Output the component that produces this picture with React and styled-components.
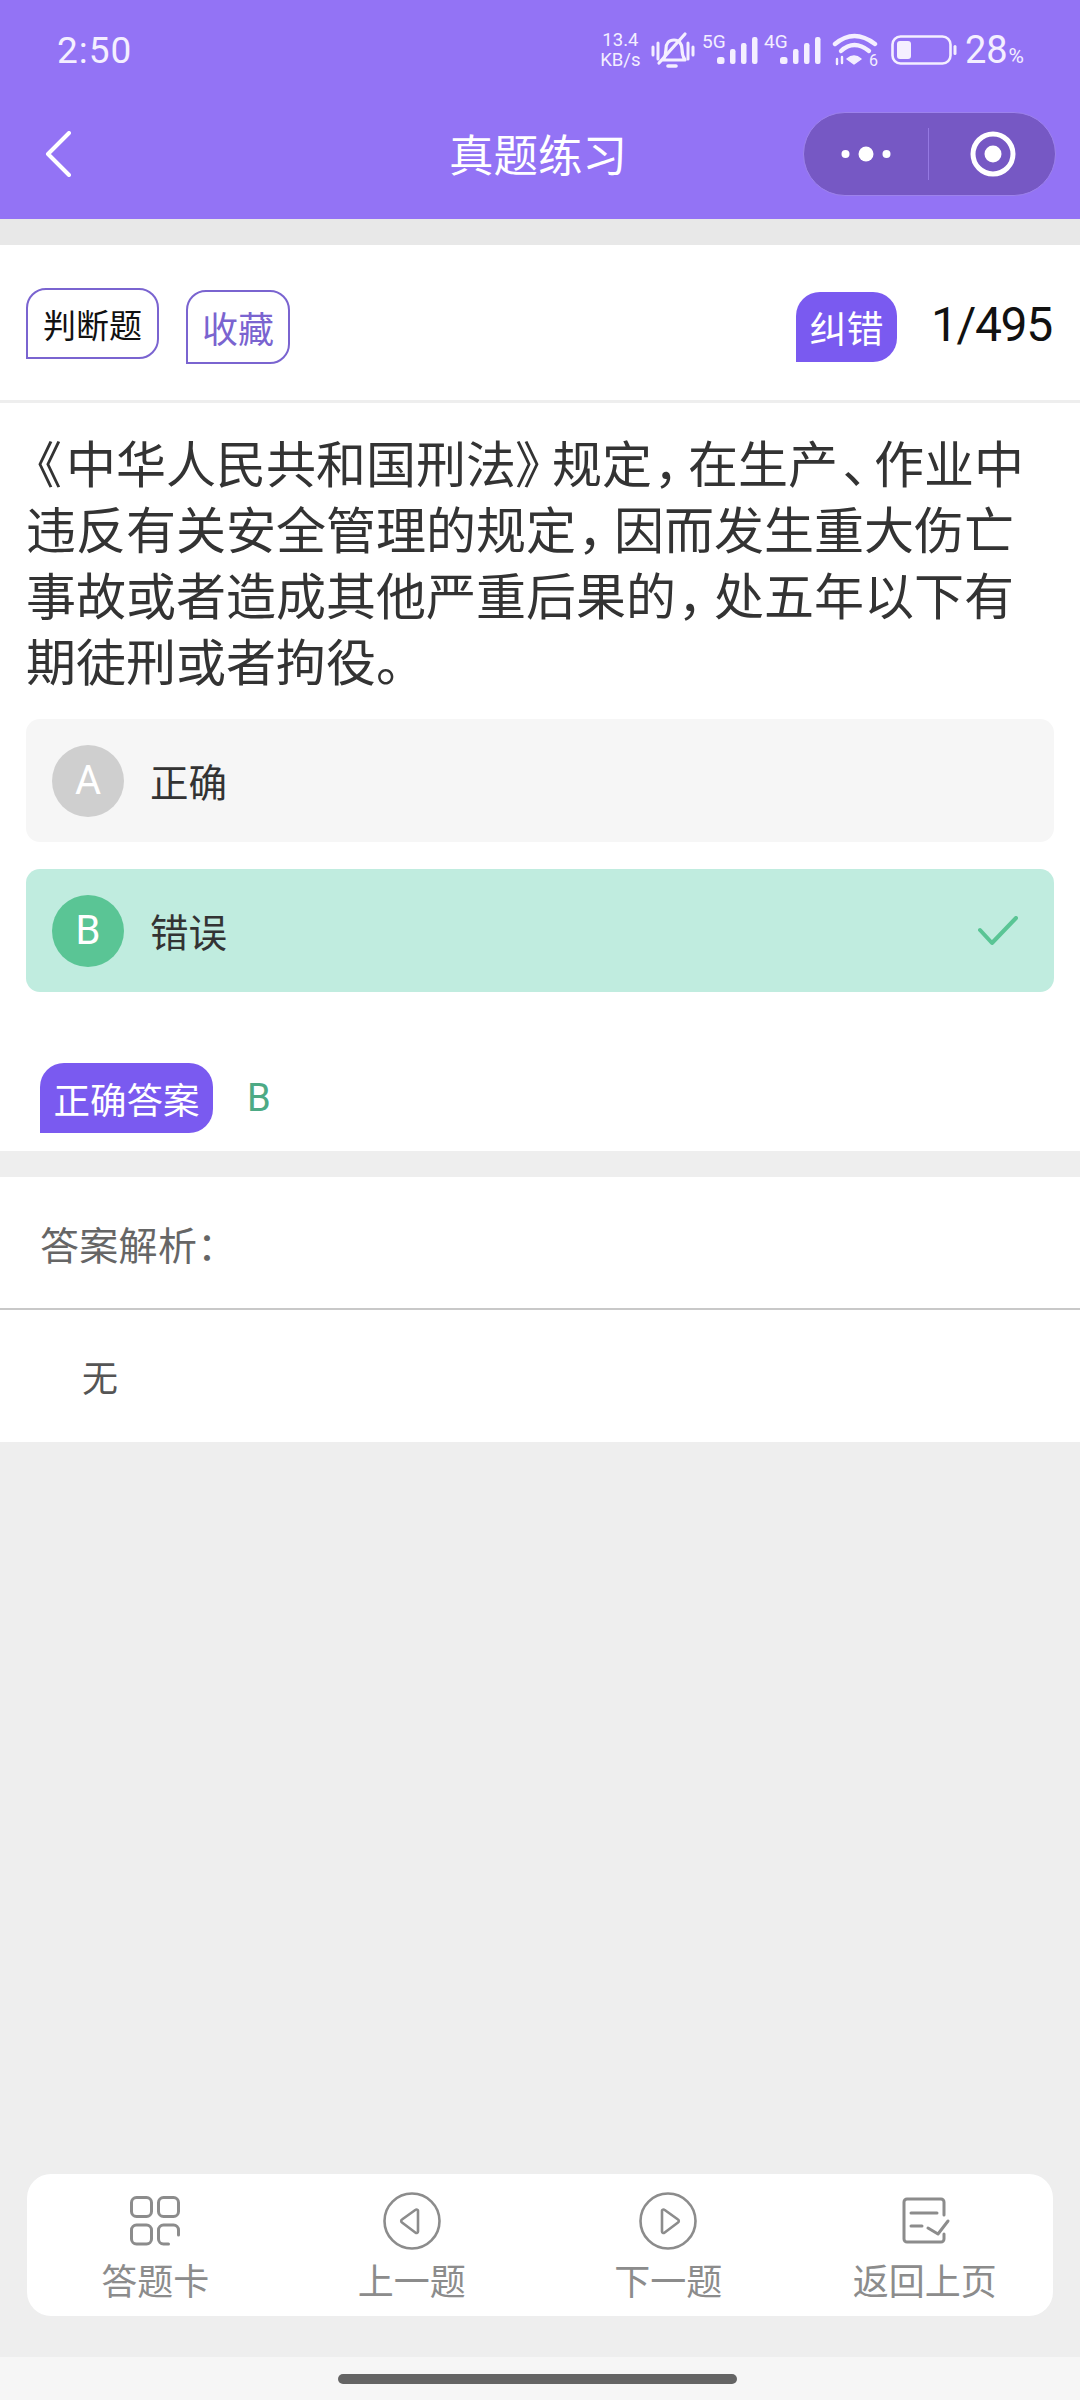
import React from "react";
import styled, { createGlobalStyle } from "styled-components";

const CJK = `"Noto Sans CJK SC", "Noto Sans", sans-serif`;

const Global = createGlobalStyle`
  html, body { margin: 0; padding: 0; background: #eeeeee; }
  * { box-sizing: border-box; }
  body { font-family: ${CJK}; }
`;

const Page = styled.div`
  width: 1080px; height: 2400px; display: flex; flex-direction: column; background: #eeeeee; overflow: hidden;
`;
const Header = styled.header`
  height: 219px; background: #9373f5; display: flex; flex-direction: column; color: #fff; flex: none;
`;
const StatusBar = styled.div`
  height: 100px; padding: 0 56px 0 57px; display: flex; align-items: center; justify-content: space-between; color: #f4efff;
`;
const Time = styled.span`
  font: 400 37px/1 Roboto, sans-serif; letter-spacing: 1px;
`;
const StatusIcons = styled.div`
  display: flex; align-items: center; height: 50px;
`;
const Speed = styled.div`
  font: 400 18.5px/20px Roboto, sans-serif; width: 41px; text-align: center; margin-right: 9px; white-space: nowrap;
  span { display: block; }
`;
const Battery = styled.span`
  font: 400 38px/1 Roboto, sans-serif; margin-left: 8px; display: flex; align-items: baseline;
  small { font-size: 21px; margin-left: 1px; }
`;
const NavBar = styled.div`
  height: 119px; padding: 0 24px 12px 45px; display: flex; align-items: center; position: relative;
`;
const NavTitle = styled.h1`
  margin: 0 auto; font: 400 44.5px/1 ${CJK}; position: absolute; left: 0; right: 4px; text-align: center;
`;
const Capsule = styled.div`
  margin-left: auto; width: 253px; height: 84px; border-radius: 42px; background: #7658c4;
  border: 1px solid #9d82ec; display: flex; align-items: center; position: relative; z-index: 1;
`;
const CapsuleSide = styled.div`
  flex: 1; display: flex; align-items: center; justify-content: center; height: 52px;
  & + & { border-left: 1px solid #9579e2; padding-left: 3px; }
`;
const TopGap = styled.div`
  height: 26px; flex: none; background: #e8e8e8;
`;
const Card = styled.section`
  background: #fff; flex: none;
`;
const Toolbar = styled.div`
  height: 158px; border-bottom: 3px solid #eeeeee; display: flex; align-items: flex-start; padding: 43px 27px 0 26px;
`;
const Chip = styled.span`
  display: flex; align-items: center; justify-content: center; width: ${p => p.$w}px; height: ${p => p.$h}px;
  margin-top: ${p => p.$top}px; margin-left: ${p => p.$left}px; border: 2px solid #7a64d0;
  border-radius: 20px 20px 20px 0; font-size: ${p => p.$size}px; color: ${p => p.$color}; background: #fff;
`;
const FixBtn = styled.span`
  margin-left: auto; margin-top: 4px; width: 101px; height: 70px; border-radius: 24px 24px 24px 0; background: #7a5af0;
  color: #fff; font-size: 37px; display: flex; align-items: center; justify-content: center;
`;
const Counter = styled.span`
  margin-left: 34px; margin-top: 7px; width: 122px; font: 400 48px/60px Roboto, sans-serif; color: #111; letter-spacing: -1.4px; white-space: nowrap;
`;
const Question = styled.div`
  padding: 25px 0 0 26px; font-size: 50px; line-height: 66px; color: #333; height: 316px;
`;
const QuestionLine = styled.div`
  white-space: nowrap;
`;
const Mark = styled.span`
  display: inline-block; width: ${p => p.$w}px; padding-left: ${p => p.$l || 0}px; font-feature-settings: "palt";
`;
const Options = styled.div`
  padding: 0 26px; display: flex; flex-direction: column; gap: 27px;
`;
const Option = styled.div`
  height: 123px; border-radius: 14px; background: ${p => (p.$ok ? "#c0ecdf" : "#f6f6f6")}; display: flex; align-items: center;
  padding: 0 36px 0 26px;
`;
const Letter = styled.span`
  width: 72px; height: 72px; border-radius: 50%; background: ${p => (p.$ok ? "#5ac595" : "#cfcfcf")}; color: #fff;
  font: 400 40px/72px Roboto, sans-serif; text-align: center; flex: none;
`;
const OptionText = styled.span`
  font-size: 38.5px; line-height: 1.2; color: #333; margin-left: 26px; flex: 1;
`;
const AnswerRow = styled.div`
  height: 159px; padding: 71px 0 0 40px; display: flex; align-items: flex-start;
`;
const AnswerTag = styled.span`
  width: 173px; height: 70px; border-radius: 24px 24px 24px 0; background: #7a5af0; color: #fff; font-size: 36.5px;
  display: flex; align-items: center; justify-content: center; white-space: nowrap;
`;
const AnswerValue = styled.span`
  margin-left: 34px; font: 400 38px/70px Roboto, sans-serif; color: #4daa85;
`;
const Gap = styled.div`
  height: 26px; flex: none;
`;
const AnalysisTitle = styled.div`
  height: 133px; border-bottom: 2px solid #c8c8c8; padding: 0 40px 0; display: flex; align-items: center;
  font-size: 39px; color: #666; letter-spacing: 0.3px;
`;
const AnalysisBody = styled.div`
  height: 132px; padding: 0 82px; display: flex; align-items: center; font-size: 36px; color: #555;
`;
const Spacer = styled.div`
  flex: 1; display: flex; flex-direction: column; justify-content: flex-end; padding: 0 27px 41px;
`;
const TabCard = styled.nav`
  height: 142px; border-radius: 24px; background: #fff; display: grid; grid-template-columns: repeat(4, 1fr);
`;
const Tab = styled.div`
  display: flex; flex-direction: column; align-items: center; color: #8c8c8c; font-size: 36px; line-height: 40px; padding-top: 17px;
  svg { display: block; height: 60px; margin-bottom: 8px; }
`;
const HomeBar = styled.div`
  height: 43px; flex: none; background: #f6f6f6; display: flex; justify-content: center; padding: 17px 5px 0 0;
`;
const HomePill = styled.span`
  width: 399px; height: 10px; border-radius: 5px; background: #646464;
`;

const INK = "#f4efff";

const Bell = () => (
  <svg width="46" height="38" viewBox="0 0 46 38" fill="none" stroke={INK} strokeWidth="3.2" strokeLinecap="round" strokeLinejoin="round" style={{ marginRight: 6 }}>
    <path d="M3 16v8M8 12v16M38 12v16M43 16v8" strokeWidth="3" />
    <path d="M13 29c2-3 3-5 3-11 0-6 3-9 8-9 5 0 8 4 8 9 0 4 1 8 3 11z" />
    <path d="M9 32 35 3" />
    <path d="M18 35h8" strokeWidth="3.6" />
  </svg>
);

const Signal = ({ label, x, gap }) => (
  <svg width={x + 42} height="40" viewBox={`0 -3 ${x + 42} 40`} fill={INK} style={{ marginRight: gap }}>
    <text x="0" y="15" fontFamily="Roboto, sans-serif" fontSize="19">{label}</text>
    <rect x={x + 1} y="24" width="7.5" height="7" rx="2.5" />
    <rect x={x + 14} y="16" width="5.5" height="15" rx="2.2" />
    <rect x={x + 25} y="10" width="5.5" height="21" rx="2.2" />
    <rect x={x + 36} y="4" width="5.5" height="27" rx="2.2" />
  </svg>
);

const Wifi = () => (
  <svg width="46" height="40" viewBox="0 -1 46 40" fill="none" stroke={INK} strokeWidth="4.4" strokeLinecap="round" style={{ marginRight: 13 }}>
    <path d="M3 13Q22-3 43 13" />
    <path d="M9 20Q22 8 37 20" />
    <path d="M15 28Q22 22 29 28L22 33Z" fill={INK} stroke={INK} strokeWidth="1.5" strokeLinejoin="round" />
    <path d="M5 28v5M10 26v6" strokeWidth="2.4" />
    <text x="37" y="35" fontFamily="Roboto, sans-serif" fontSize="16" fill={INK} stroke="none">6</text>
  </svg>
);

const BatteryIcon = () => (
  <svg width="66" height="30" viewBox="0 0 66 30" fill="none">
    <rect x="1.5" y="1.5" width="58" height="27" rx="8" stroke={INK} strokeWidth="2.6" />
    <rect x="6" y="6" width="14" height="18" rx="3" fill={INK} />
    <rect x="62.5" y="10" width="3" height="10" rx="1.5" fill={INK} />
  </svg>
);

const BackIcon = () => (
  <svg width="26" height="46" viewBox="0 0 26 46" fill="none" stroke="#fff" strokeWidth="4" strokeLinecap="round" strokeLinejoin="round">
    <path d="M24 2 3 23l21 21" />
  </svg>
);
const DotsIcon = () => (
  <svg width="50" height="16" viewBox="0 0 50 16" fill="#fff">
    <circle cx="4.5" cy="8" r="4" />
    <circle cx="25" cy="8" r="7.5" />
    <circle cx="45.5" cy="8" r="4" />
  </svg>
);
const RecordIcon = () => (
  <svg width="46" height="46" viewBox="0 0 46 46" fill="none">
    <circle cx="23" cy="23" r="20" stroke="#fff" strokeWidth="5" />
    <circle cx="23" cy="23" r="8.5" fill="#fff" />
  </svg>
);
const CheckIcon = () => (
  <svg width="40" height="30" viewBox="0 0 40 30" fill="none" stroke="#5ac595" strokeWidth="4" strokeLinecap="round" strokeLinejoin="round">
    <path d="M2 14 14 27 38 2" />
  </svg>
);
const tabStroke = { fill: "none", stroke: "#8c8c8c", strokeWidth: 3, strokeLinecap: "round", strokeLinejoin: "round" };
const GridIcon = () => (
  <svg width="60" height="60" viewBox="0 0 60 60" {...tabStroke}>
    <rect x="6.5" y="6.5" width="20" height="19" rx="5" />
    <rect x="33.5" y="6.5" width="20" height="19" rx="5" />
    <rect x="6.5" y="34" width="20" height="19" rx="5" />
    <path d="M53.5 44v-5a5 5 0 0 0-5-5h-10a5 5 0 0 0-5 5v9a5 5 0 0 0 5 5h5" />
  </svg>
);
const PrevIcon = () => (
  <svg width="60" height="60" viewBox="0 0 60 60" {...tabStroke}>
    <circle cx="30" cy="30" r="27.5" strokeWidth="2.6" />
    <path d="M36 19.5v21a1.5 1.5 0 0 1-2.4 1.2L20 31.5a1.8 1.8 0 0 1 0-3l13.6-9.7a1.5 1.5 0 0 1 2.4 1z" strokeWidth="2.6" />
  </svg>
);
const NextIcon = () => (
  <svg width="60" height="60" viewBox="0 0 60 60" {...tabStroke}>
    <circle cx="30" cy="30" r="27.5" strokeWidth="2.6" />
    <path d="M24 19.5v21a1.5 1.5 0 0 0 2.4 1.2L40 31.5a1.8 1.8 0 0 0 0-3l-13.6-9.7a1.5 1.5 0 0 0-2.4 1z" strokeWidth="2.6" />
  </svg>
);
const ReturnIcon = () => (
  <svg width="60" height="60" viewBox="0 0 60 60" {...tabStroke}>
    <path d="M49 24V11a3 3 0 0 0-3-3H12a3 3 0 0 0-3 3v37a3 3 0 0 0 3 3h34a3 3 0 0 0 3-3v-5" />
    <path d="M16 22h26M16 35h11" />
    <path d="M33 37l10 6 10-13" />
  </svg>
);

export default function App() {
  return (
    <Page>
      <Global />
      <Header>
        <StatusBar>
          <Time>2:50</Time>
          <StatusIcons>
            <Speed><span>13.4</span><span>KB/s</span></Speed>
            <Bell />
            <Signal label="5G" x={14} gap={6} />
            <Signal label="4G" x={15} gap={11} />
            <Wifi />
            <BatteryIcon />
            <Battery>28<small>%</small></Battery>
          </StatusIcons>
        </StatusBar>
        <NavBar>
          <BackIcon />
          <NavTitle>真题练习</NavTitle>
          <Capsule>
            <CapsuleSide><DotsIcon /></CapsuleSide>
            <CapsuleSide><RecordIcon /></CapsuleSide>
          </Capsule>
        </NavBar>
      </Header>
      <TopGap />
      <Card>
        <Toolbar>
          <Chip $w={133} $h={71} $top={0} $left={0} $size={33} $color="#111">判断题</Chip>
          <Chip $w={104} $h={74} $top={2} $left={27} $size={36} $color="#7a64d0">收藏</Chip>
          <FixBtn>纠错</FixBtn>
          <Counter>1/495</Counter>
        </Toolbar>
        <Question>
          <QuestionLine><Mark $w={40} $l={10}>《</Mark>中华人民共和国刑法<Mark $w={36}>》</Mark>规定<Mark $w={36} $l={5}>，</Mark>在生产<Mark $w={36} $l={5}>、</Mark>作业中</QuestionLine>
          <QuestionLine>违反有关安全管理的规定<Mark $w={38} $l={5}>，</Mark>因而发生重大伤亡</QuestionLine>
          <QuestionLine>事故或者造成其他严重后果的<Mark $w={38} $l={5}>，</Mark>处五年以下有</QuestionLine>
          <QuestionLine>期徒刑或者拘役。</QuestionLine>
        </Question>
        <Options>
          <Option>
            <Letter>A</Letter>
            <OptionText>正确</OptionText>
          </Option>
          <Option $ok>
            <Letter $ok>B</Letter>
            <OptionText>错误</OptionText>
            <CheckIcon />
          </Option>
        </Options>
        <AnswerRow>
          <AnswerTag>正确答案</AnswerTag>
          <AnswerValue>B</AnswerValue>
        </AnswerRow>
      </Card>
      <Gap />
      <Card>
        <AnalysisTitle>答案解析：</AnalysisTitle>
        <AnalysisBody>无</AnalysisBody>
      </Card>
      <Spacer>
        <TabCard>
          <Tab><GridIcon />答题卡</Tab>
          <Tab><PrevIcon />上一题</Tab>
          <Tab><NextIcon />下一题</Tab>
          <Tab><ReturnIcon />返回上页</Tab>
        </TabCard>
      </Spacer>
      <HomeBar><HomePill /></HomeBar>
    </Page>
  );
}
